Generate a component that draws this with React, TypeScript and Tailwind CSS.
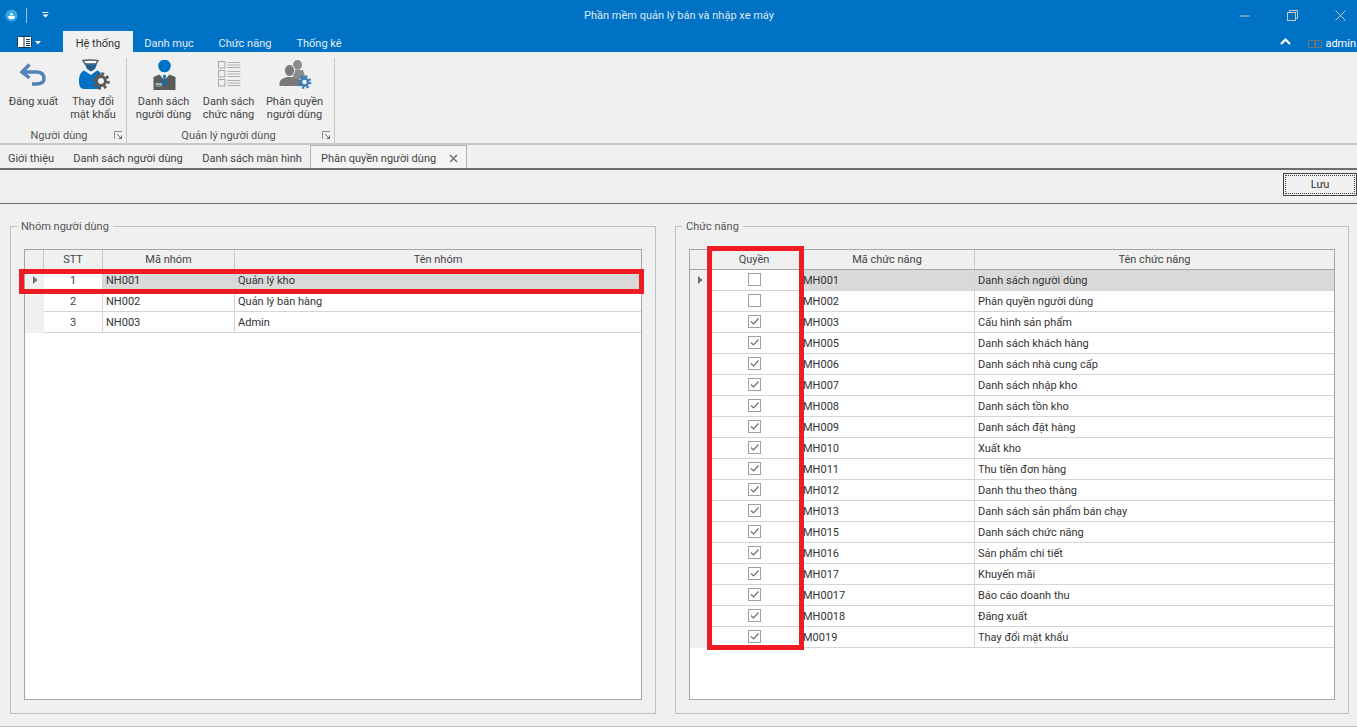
import React from "react";

function Gear({ cx, cy, r, color, hole }: { cx: number; cy: number; r: number; color: string; hole: string }) {
  const c = 2 * Math.PI * r;
  return (
    <g>
      <circle cx={cx} cy={cy} r={r} fill="none" stroke={color} strokeWidth={r * 0.5} strokeDasharray={`${c / 16} ${c / 16}`} />
      <circle cx={cx} cy={cy} r={r * 0.85} fill={color} />
      <circle cx={cx} cy={cy} r={r * 0.42} fill={hole} />
    </g>
  );
}

function Launcher() {
  return (
    <svg width="9" height="9" viewBox="0 0 9 9" className="shrink-0">
      <path d="M0.5 8V0.5H8" fill="none" stroke="#8a8a8a" />
      <path d="M3 3L7.5 7.5M7.5 4.5V7.5H4.5" fill="none" stroke="#6a6a6a" />
    </svg>
  );
}

function IconUndo() {
  return (
    <svg width="32" height="32" viewBox="0 0 32 32">
      <path d="M11.5 4.5L4 12L11.5 18" fill="none" stroke="#4f83b9" strokeWidth="3.4" />
      <path d="M5 12H18C24 12 26 15 26 18.5C26 22 24 24 18 24H14" fill="none" stroke="#4f83b9" strokeWidth="3.4" />
    </svg>
  );
}
function IconPassword() {
  return (
    <svg width="34" height="34" viewBox="0 0 34 34">
      <path d="M7 1.5L14.5 0.8L22 1.5L20 5H9Z" fill="#fff" stroke="#3f5468" strokeWidth="1.3" />
      <path d="M9 5.5H21L19 10L15 12.5L11 10Z" fill="#1f5f92" />
      <path d="M8 11.5L15 16L21 11.5C24 12.5 25 14 25 16V30H8C4.5 30 3 27 3 22C3 17 4.5 13 8 11.5Z" fill="#0072c6" />
      <Gear cx={25} cy={22} r={7} color="#5b5b5b" hole="#f0f0f0" />
    </svg>
  );
}
function IconUsers() {
  return (
    <svg width="32" height="32" viewBox="0 0 32 32">
      <circle cx="16.5" cy="6" r="6.3" fill="#0072c6" />
      <path d="M5.5 17L11.5 14.5L15.5 19H17.5L21.5 14.5L27.5 17V30H5.5Z" fill="#5b5b5b" />
      <path d="M15 15H18L17.5 19L18.5 24L16.5 26L14.5 24L15.5 19Z" fill="#0072c6" />
      <path d="M7.5 24H14" stroke="#fff" strokeWidth="1" />
      <path d="M7.5 26H14" stroke="#7fb8e0" strokeWidth="1" />
    </svg>
  );
}
function IconList() {
  return (
    <svg width="32" height="32" viewBox="0 0 32 32">
      {[1, 10, 19].map((y) => (
        <g key={y}>
          <rect x="5.5" y={y + 0.5} width="6.5" height="6.5" fill="none" stroke="#a8a8a8" />
          <path d={`M14.5 ${y + 1.5}H27.5M14.5 ${y + 4}H27.5M14.5 ${y + 6.5}H27.5`} stroke="#b0b0b0" />
        </g>
      ))}
    </svg>
  );
}
function IconPerm() {
  return (
    <svg width="34" height="32" viewBox="0 0 34 32">
      <ellipse cx="19.5" cy="5" rx="4.5" ry="5" fill="#8c8c8c" />
      <path d="M15 10H25L28 19H15Z" fill="#8c8c8c" />
      <ellipse cx="11.5" cy="10.5" rx="5" ry="6" fill="#7a7a7a" stroke="#f0f0f0" />
      <path d="M1.5 26V23C1.5 20 5 18 9 17H14C18 18 24 20 24 23V26Z" fill="#7a7a7a" />
      <Gear cx={26.5} cy={22} r={5.5} color="#3d7cb8" hole="#f0f0f0" />
    </svg>
  );
}

function RibbonButton({ w, icon, lines }: { w: string; icon: React.ReactNode; lines: string[] }) {
  return (
    <div className={`${w} flex flex-col items-center`}>
      <div className="h-[36px] flex items-center justify-center">{icon}</div>
      <div className="mt-[1px] text-center leading-[13px] text-[#444]">
        {lines.map((l) => (
          <div key={l} className="whitespace-nowrap">{l}</div>
        ))}
      </div>
    </div>
  );
}

function RibbonGroup({ width, label, labelPad, children }: { width: string; label: string; labelPad: string; children: React.ReactNode }) {
  return (
    <div className={`${width} h-[85px] flex flex-col border-r border-[#c6c6c6]`}>
      <div className="h-[69px] flex">{children}</div>
      <div className="flex items-center h-[16px] text-[#555]">
        <div className={`${labelPad} pt-[2px] flex-1 text-center whitespace-nowrap`}>{label}</div>
        <div className="pr-[3px] flex items-center"><Launcher /></div>
      </div>
    </div>
  );
}

function Arrow() {
  return (
    <svg width="6" height="8" viewBox="0 0 6 8">
      <path d="M1 0L5.5 4L1 8Z" fill="#6e6e6e" />
    </svg>
  );
}

function Check({ on }: { on: boolean }) {
  return (
    <div className="w-[13px] h-[13px] border border-[#a0a0a0] bg-white flex items-center justify-center">
      {on && (
        <svg width="11" height="11" viewBox="0 0 11 11">
          <path d="M2 5.5L4.5 8L9.5 2.5" fill="none" stroke="#6e6e6e" strokeWidth="1.2" />
        </svg>
      )}
    </div>
  );
}

const groups = [
  ["1", "NH001", "Quản lý kho"],
  ["2", "NH002", "Quản lý bán hàng"],
  ["3", "NH003", "Admin"],
];

const funcs: [boolean, string, string][] = [
  [false, "MH001", "Danh sách người dùng"],
  [false, "MH002", "Phân quyền người dùng"],
  [true, "MH003", "Cấu hình sản phẩm"],
  [true, "MH005", "Danh sách khách hàng"],
  [true, "MH006", "Danh sách nhà cung cấp"],
  [true, "MH007", "Danh sách nhập kho"],
  [true, "MH008", "Danh sách tồn kho"],
  [true, "MH009", "Danh sách đặt hàng"],
  [true, "MH010", "Xuất kho"],
  [true, "MH011", "Thu tiền đơn hàng"],
  [true, "MH012", "Danh thu theo thàng"],
  [true, "MH013", "Danh sách sản phẩm bán chạy"],
  [true, "MH015", "Danh sách chức năng"],
  [true, "MH016", "Sản phẩm chi tiết"],
  [true, "MH017", "Khuyến mãi"],
  [true, "MH0017", "Báo cáo doanh thu"],
  [true, "MH0018", "Đăng xuất"],
  [true, "M0019", "Thay đổi mật khẩu"],
];

function HeaderCell({ className, children }: { className: string; children?: React.ReactNode }) {
  return (
    <div className={`${className} h-full pt-[2px] flex items-center justify-center border-r border-[#c8c8c8] text-[#444] whitespace-nowrap`}>
      {children}
    </div>
  );
}

function Fieldset({ legend, width, children }: { legend: string; width: string; children: React.ReactNode }) {
  return (
    <fieldset className={`${width} h-[495px] border border-[#c0c0c0] pl-[13px] pr-[13px]`}>
      <legend className="-ml-[7px] px-[4px] h-[14px] pt-[1px] leading-[14px] text-[#555]">{legend}</legend>
      <div className="mt-[16px] h-[451px] border border-[#a6a6a6] bg-white overflow-hidden">{children}</div>
    </fieldset>
  );
}

export default function App() {
  return (
    <div
      className="relative w-full h-[727px] overflow-hidden bg-[#f0f0f0] flex flex-col text-[11px] text-[#333]"
      style={{ fontFamily: 'Roboto, "Liberation Sans", sans-serif' }}
    >
      {/* title bar */}
      <div className="h-[30px] bg-[#0072c6] flex items-center shrink-0 relative">
        <div className="pl-[5px] flex items-center">
          <svg width="13" height="13" viewBox="0 0 13 13">
            <circle cx="6.5" cy="6.5" r="6" fill="#39a9e6" />
            <path d="M3 7H10L9 10H4ZM4.5 6.3L6.5 3.5L8.5 6.3Z" fill="#fff" />
          </svg>
          <div className="ml-[8px] w-px h-[15px] bg-[#9cc6e6]" />
          <svg width="7" height="6" viewBox="0 0 7 6" className="ml-[15px]">
            <path d="M0.5 0.5H6.5" stroke="#fff" />
            <path d="M0.5 2.5H6.5L3.5 5.5Z" fill="#fff" />
          </svg>
        </div>
        <div className="flex-1 text-center text-[#dfe9f3] pl-[70px] pt-[2px] whitespace-nowrap">Phần mềm quản lý bán và nhập xe máy</div>
        <div className="flex items-center pr-[11px] gap-[37px]">
          <svg width="11" height="11" viewBox="0 0 11 11"><path d="M0.5 6H10.5" stroke="#c9c9c9" /></svg>
          <svg width="11" height="11" viewBox="0 0 11 11">
            <path d="M2.5 2.5V0.5H10.5V8.5H8.5" fill="none" stroke="#c9c9c9" />
            <rect x="0.5" y="2.5" width="8" height="8" fill="#0072c6" stroke="#c9c9c9" />
          </svg>
          <svg width="11" height="11" viewBox="0 0 11 11"><path d="M0.5 0.5L10.5 10.5M10.5 0.5L0.5 10.5" stroke="#c9c9c9" /></svg>
        </div>
      </div>

      {/* ribbon tabs */}
      <div className="h-[22px] bg-[#0072c6] flex items-end shrink-0 relative">
        <div className="w-[63px] h-full flex items-center pl-[17px] gap-[3px] pt-[2px]">
          <svg width="15" height="13" viewBox="0 0 15 13">
            <rect x="0.5" y="0.5" width="14" height="11" rx="1" fill="#fff" stroke="#13395c" />
            <path d="M7 1V11" stroke="#13395c" />
            <path d="M9 3.5H13M9 5.5H13M9 7.5H13M9 9.5H13" stroke="#13395c" />
          </svg>
          <svg width="6" height="4" viewBox="0 0 6 4" className="mt-[1px]"><path d="M0 0H6L3 3.5Z" fill="#fff" /></svg>
        </div>
        <div className="w-[70px] h-[21px] pt-[5px] bg-[#f0f0f0] flex items-center justify-center text-[#333]">Hệ thống</div>
        <div className="w-[72px] h-full pt-[6px] flex items-center justify-center text-[#e3eef7]">Danh mục</div>
        <div className="w-[80px] h-full pt-[6px] flex items-center justify-center text-[#e3eef7]">Chức năng</div>
        <div className="w-[68px] h-full pt-[6px] flex items-center justify-center text-[#e3eef7]">Thống kê</div>
        <div className="flex-1" />
        <div className="h-full flex items-center pr-[1px]">
          <svg width="11" height="8" viewBox="0 0 11 8" className="mt-[2px]"><path d="M1 6L5.5 1.5L10 6" fill="none" stroke="#fff" strokeWidth="2.2" /></svg>
          <svg width="14" height="8" viewBox="0 0 14 8" className="ml-[17px] mt-[5px]">
            <path d="M0.5 0.5H6.5V7.5H0.5ZM7.5 0.5H13.5V7.5H7.5Z" fill="none" stroke="#6f7378" />
          </svg>
          <span className="ml-[3px] pt-[6px] text-white">admin</span>
        </div>
      </div>

      {/* ribbon */}
      <div className="h-[93px] shrink-0 border-b-2 border-[#c8c8c8] flex pt-[6px]">
        <RibbonGroup width="w-[127px]" label="Người dùng" labelPad="pl-[4px]">
          <div className="w-[7px]" />
          <RibbonButton w="w-[53px]" icon={<IconUndo />} lines={["Đăng xuất"]} />
          <RibbonButton w="w-[66px]" icon={<IconPassword />} lines={["Thay đổi", "mật khẩu"]} />
        </RibbonGroup>
        <RibbonGroup width="w-[208px]" label="Quản lý người dùng" labelPad="pl-[8px]">
          <div className="w-[4px]" />
          <RibbonButton w="w-[65px]" icon={<IconUsers />} lines={["Danh sách", "người dùng"]} />
          <RibbonButton w="w-[65px]" icon={<IconList />} lines={["Danh sách", "chức năng"]} />
          <RibbonButton w="w-[67px]" icon={<IconPerm />} lines={["Phân quyền", "người dùng"]} />
        </RibbonGroup>
      </div>

      {/* document tabs */}
      <div className="h-[25px] shrink-0 flex items-end border-b-2 border-[#6d6d6d] text-[#444]">
        <div className="w-[62px] h-[22px] pt-[4px] flex items-center justify-center">Giới thiệu</div>
        <div className="w-[132px] h-[22px] pt-[4px] flex items-center justify-center">Danh sách người dùng</div>
        <div className="w-[116px] h-[22px] pt-[4px] flex items-center justify-center">Danh sách màn hình</div>
        <div className="w-[157px] h-[23px] pt-[2px] flex items-center justify-between pl-[10px] pr-[8px] border border-b-0 border-[#b4b4b4] bg-[#f4f4f4]">
          <span className="pt-[2px] whitespace-nowrap">Phân quyền người dùng</span>
          <svg width="9" height="9" viewBox="0 0 9 9" className="shrink-0"><path d="M1 1L8 8M8 1L1 8" stroke="#777" strokeWidth="1.6" /></svg>
        </div>
      </div>

      {/* toolbar */}
      <div className="h-[34px] shrink-0 border-b border-[#6d6d6d] flex justify-end items-start pt-[3px]">
        <div className="w-[74px] h-[23px] border border-[#444] p-[1px]">
          <div className="w-full h-full pt-[2px] border border-dotted border-[#444] flex items-center justify-center text-[#333]">Lưu</div>
        </div>
      </div>

      {/* content */}
      <div className="flex-1 flex pl-[10px] pt-[15px] gap-[19px]">
        <Fieldset legend="Nhóm người dùng" width="w-[646px]">
          <div className="h-[19px] flex bg-[#f0f0f0] border-b border-[#a6a6a6] box-content">
            <HeaderCell className="w-[19px]" />
            <HeaderCell className="w-[59px]">STT</HeaderCell>
            <HeaderCell className="w-[132px]">Mã nhóm</HeaderCell>
            <HeaderCell className="flex-1 !border-r-0">Tên nhóm</HeaderCell>
          </div>
          {groups.map((g, i) => (
            <div key={g[0]} className={`h-[21px] flex ${i === 0 ? "bg-[#d9d9d9]" : "bg-white"}`}>
              <div className="w-[19px] pb-[1px] bg-[#f0f0f0] flex items-center justify-center">{i === 0 && <Arrow />}</div>
              <div className="w-[59px] pt-[2px] bg-white border-r border-b border-[#d4d4d4] flex items-center justify-center text-[#503c48]">{g[0]}</div>
              <div className="w-[132px] pt-[2px] border-r border-b border-[#d4d4d4] flex items-center pl-[3px]">{g[1]}</div>
              <div className="flex-1 pt-[2px] border-b border-[#d4d4d4] flex items-center pl-[3px]">{g[2]}</div>
            </div>
          ))}
        </Fieldset>

        <Fieldset legend="Chức năng" width="w-[674px]">
          <div className="h-[19px] flex bg-[#f0f0f0] border-b border-[#a6a6a6] box-content">
            <HeaderCell className="w-[19px]" />
            <HeaderCell className="w-[91px]">Quyền</HeaderCell>
            <HeaderCell className="w-[175px]">Mã chức năng</HeaderCell>
            <HeaderCell className="flex-1 !border-r-0">Tên chức năng</HeaderCell>
          </div>
          {funcs.map((f, i) => (
            <div key={f[1]} className={`h-[21px] flex ${i === 0 ? "bg-[#d9d9d9]" : "bg-white"}`}>
              <div className="w-[19px] pb-[1px] bg-[#f0f0f0] flex items-center justify-center">{i === 0 && <Arrow />}</div>
              <div className="w-[91px] pb-[1px] bg-white border-b border-[#d4d4d4] flex items-center justify-center"><Check on={f[0]} /></div>
              <div className="w-[175px] pt-[2px] border-r border-b border-[#d4d4d4] flex items-center pl-[3px]">{f[1]}</div>
              <div className="flex-1 pt-[2px] border-b border-[#d4d4d4] flex items-center pl-[3px]">{f[2]}</div>
            </div>
          ))}
        </Fieldset>
      </div>
      <div className="h-px bg-[#c0c0c0] shrink-0" />

      {/* red annotations */}
      <div className="absolute left-[19px] top-[269px] w-[625px] h-[25px] border-[5px] border-[#ed1c24]" />
      <div className="absolute left-[707px] top-[246px] w-[97px] h-[404px] border-[5px] border-[#ed1c24]" />
    </div>
  );
}
